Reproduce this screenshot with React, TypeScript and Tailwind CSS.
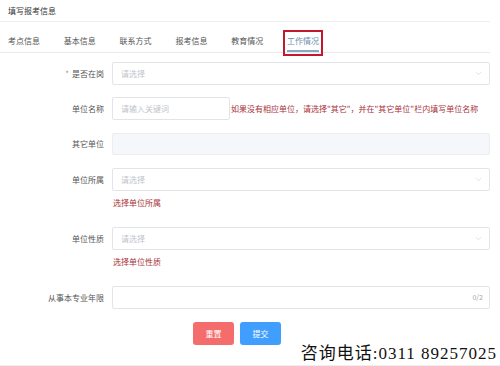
import { ChevronDown } from "lucide-react";

const tabs = ["考点信息", "基本信息", "联系方式", "报考信息", "教育情况", "工作情况"];

function Label({ text, required }: { text: string; required?: boolean }) {
  return (
    <div className="w-[105px] shrink-0 pr-[1px] text-right text-[8px] leading-[10px] text-[#555]">
      {required && <span className="mr-[3px] text-[#999]">*</span>}
      {text}
    </div>
  );
}

function Select() {
  return (
    <div className="flex h-[23px] flex-1 items-center justify-between rounded-[2px] border border-[#e2e4e9] bg-white pl-[8px] pr-[6px]">
      <span className="text-[8px] leading-[10px] text-[#c0c4cc]">请选择</span>
      <ChevronDown size={9} strokeWidth={1.5} className="text-[#c8cbd2]" />
    </div>
  );
}

function Row({ label, required, children, error, className }: {
  label: string;
  required?: boolean;
  children: React.ReactNode;
  error?: string;
  className?: string;
}) {
  return (
    <div className={className}>
      <div className="flex items-center gap-[7px] pr-[10px]">
        <Label text={label} required={required} />
        {children}
      </div>
      {error && (
        <div className="ml-[113px] mt-[7px] text-[8px] leading-[10px] text-[#a8323a]">{error}</div>
      )}
    </div>
  );
}

export default function App() {
  return (
    <div
      className="relative h-[366px] w-[500px] overflow-hidden border-b border-[#eee] bg-white"
      style={{ fontFamily: '"Noto Sans CJK SC", "Noto Sans", sans-serif' }}
    >
      <div className="mr-[10px] h-[22px] border-b border-[#eceef0] pl-[8px] pt-[6px] text-[8px] leading-[10px] text-[#333]">
        填写报考信息
      </div>

      <div className="mr-[10px] flex h-[31px] items-end gap-[23.8px] border-b border-[#e8eaed] pl-[8px]">
        {tabs.map((t, i) => {
          const active = i === tabs.length - 1;
          return (
            <div key={t} className="relative w-[32px] pb-[6px]">
              <span className={`block text-[8px] leading-[10px] ${active ? "text-[#6b8fae]" : "text-[#555]"}`}>
                {t}
              </span>
              {active && (
                <>
                  <div className="absolute bottom-[0px] left-0 h-[2px] w-[32px] bg-[#86a9c4]" />
                  <div className="absolute -left-[4px] -top-[6px] h-[26px] w-[40px] border-2 border-[#c3182c]" />
                </>
              )}
            </div>
          );
        })}
      </div>

      <Row label="是否在岗" required className="mt-[9px]">
        <Select />
      </Row>

      <Row label="单位名称" className="mt-[12px]">
        <div className="flex h-[23px] w-[118px] items-center rounded-[2px] border border-[#e2e4e9] pl-[8px] text-[8px] leading-[10px] text-[#c0c4cc]">
          请输入关键词
        </div>
        <span className="-ml-[6px] whitespace-nowrap text-[8px] leading-[10px] text-[#a8323a]">
          如果没有相应单位，请选择"其它"，并在"其它单位"栏内填写单位名称
        </span>
        <div className="flex-1" />
      </Row>

      <Row label="其它单位" className="mt-[13px]">
        <div className="h-[22px] flex-1 rounded-[2px] border border-[#eceef1] bg-[#f5f7fa]" />
      </Row>

      <Row label="单位所属" error="选择单位所属" className="mt-[13px]">
        <Select />
      </Row>

      <Row label="单位性质" error="选择单位性质" className="mt-[19px]">
        <Select />
      </Row>

      <Row label="从事本专业年限" className="mt-[19px]">
        <div className="flex h-[23px] flex-1 items-center justify-end rounded-[2px] border border-[#e2e4e9] pr-[6px] text-[7px] leading-[9px] text-[#a0a4ab]">
          0/2
        </div>
      </Row>

      <div className="ml-[193px] mt-[13px] flex gap-[6px]">
        <button className="h-[23px] w-[41px] rounded-[3px] bg-[#f56c6c] text-[8px] leading-[10px] text-white">
          重置
        </button>
        <button className="h-[23px] w-[41px] rounded-[3px] bg-[#409eff] text-[8px] leading-[10px] text-white">
          提交
        </button>
      </div>

      <div
        className="absolute bottom-[3px] right-[3px] whitespace-nowrap text-[17px] font-normal leading-[17px] tracking-[1px] text-[#111]"
        style={{ fontFamily: '"Liberation Serif", "Noto Sans CJK SC", serif', textShadow: "0 0 1px #fff" }}
      >
        咨询电话:0311 89257025
      </div>
    </div>
  );
}
